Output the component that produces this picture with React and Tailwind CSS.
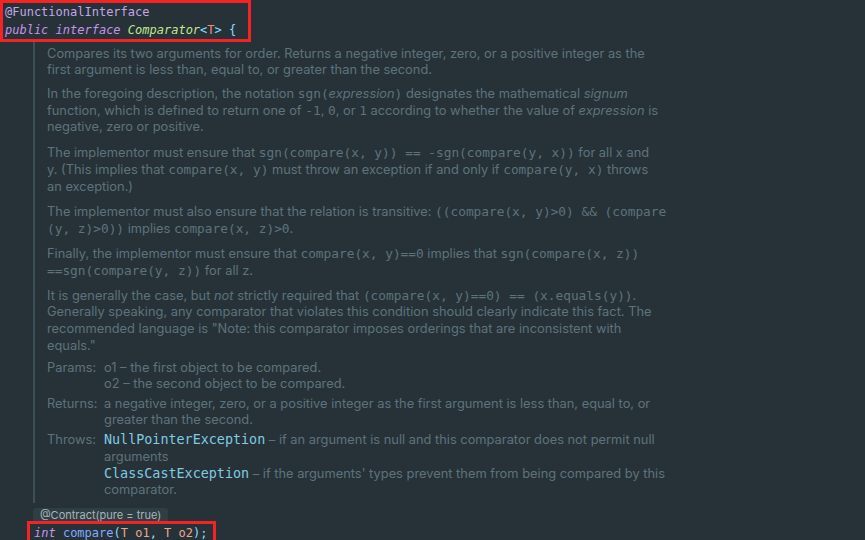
import React from 'react'

const mono = "font-['DejaVu_Sans_Mono','Liberation_Mono',monospace]"

// inline code inside the doc text
const C = ({ children }) => (
  <span className={`${mono} text-[12.8px] leading-none`}>{children}</span>
)

const Link = ({ children }) => (
  <span className={`${mono} text-[13.4px] leading-none text-[#80cbe4]`}>{children}</span>
)

const Row = ({ label, children }) => (
  <div className="flex">
    <div className="w-[57px] shrink-0">{label}</div>
    <div>{children}</div>
  </div>
)

const App = () => {
  return (
    <div className="w-[865px] h-[540px] overflow-hidden bg-[#263238] font-['Inter','Liberation_Sans',Arial,sans-serif]">
      {/* declaration */}
      <div className={`w-[251px] h-[42px] border-[3px] border-[#f52424] pl-[2px] ${mono} text-[12px] leading-[18px] whitespace-nowrap`}>
        <div className="text-[#c3a6e6]">@FunctionalInterface</div>
        <div className="italic">
          <span className="text-[#c792ea]">public interface </span>
          <span className="text-[#c3e88d]">Comparator</span>
          <span className="not-italic text-[#89ddff]">&lt;</span>
          <span className="not-italic text-[#f78c6c]">T</span>
          <span className="not-italic text-[#89ddff]">&gt; {'{'}</span>
        </div>
      </div>

      {/* javadoc */}
      <div className="ml-[33px] border-l-2 border-[#3c4e56] pl-[12px] pt-[4px] pb-[4px] text-[12.85px] text-[#5f727c] whitespace-nowrap">
        <p className="leading-[16px] mb-[8px]">
          Compares its two arguments for order. Returns a negative integer, zero, or a positive integer as the<br />
          first argument is less than, equal to, or greater than the second.
        </p>
        <p className="leading-[16.5px] mb-[8px]">
          In the foregoing description, the notation <C>sgn(</C><i>expression</i><C>)</C> designates the mathematical <i>signum</i><br />
          function, which is defined to return one of <C>-1</C>, <C>0</C>, or <C>1</C> according to whether the value of <i>expression</i> is<br />
          negative, zero or positive.
        </p>
        <p className="leading-[17px] mb-[8px]">
          The implementor must ensure that <C>sgn(compare(x, y)) == -sgn(compare(y, x))</C> for all x and<br />
          y. (This implies that <C>compare(x, y)</C> must throw an exception if and only if <C>compare(y, x)</C> throws<br />
          an exception.)
        </p>
        <p className="leading-[17px] mb-[8px]">
          The implementor must also ensure that the relation is transitive: <C>((compare(x, y)&gt;0) &amp;&amp; (compare</C><br />
          <C>(y, z)&gt;0))</C> implies <C>compare(x, z)&gt;0</C>.
        </p>
        <p className="leading-[17px] mb-[9px]">
          Finally, the implementor must ensure that <C>compare(x, y)==0</C> implies that <C>sgn(compare(x, z))</C><br />
          <C>==sgn(compare(y, z))</C> for all z.
        </p>
        <p className="leading-[16.7px] mb-[6px]">
          It is generally the case, but <i>not</i> strictly required that <C>(compare(x, y)==0) == (x.equals(y))</C>.<br />
          Generally speaking, any comparator that violates this condition should clearly indicate this fact. The<br />
          recommended language is "Note: this comparator imposes orderings that are inconsistent with<br />
          equals."
        </p>

        <div className="leading-[16px] flex flex-col gap-[4px]">
          <Row label="Params:">
            o1 – the first object to be compared.<br />
            o2 – the second object to be compared.
          </Row>
          <Row label="Returns:">
            a negative integer, zero, or a positive integer as the first argument is less than, equal to, or<br />
            greater than the second.
          </Row>
          <div className="leading-[16.7px]">
            <Row label="Throws:">
              <Link>NullPointerException</Link> – if an argument is null and this comparator does not permit null<br />
              arguments<br />
              <Link>ClassCastException</Link> – if the arguments' types prevent them from being compared by this<br />
              comparator.
            </Row>
          </div>
        </div>
      </div>

      {/* annotation hint */}
      <div className="mt-[5px] ml-[33px] w-fit h-[13px] rounded-t-[3px] bg-[#2f3e45] px-[7px] text-[11px] leading-[14px] text-[#a7b4ba]">
        @Contract(pure = true)
      </div>

      {/* method */}
      <div className={`ml-[27px] w-[189px] h-[24px] border-[3px] border-[#f52424] pl-[4px] ${mono} text-[12px] leading-[18px] whitespace-nowrap`}>
        <span className="italic text-[#c792ea]">int</span>
        <span className="text-[#82aaff]"> compare</span>
        <span className="text-[#89ddff]">(</span>
        <span className="text-[#e9a989]">T o1</span>
        <span className="text-[#89ddff]">, </span>
        <span className="text-[#e9a989]">T o2</span>
        <span className="text-[#89ddff]">);</span>
      </div>
    </div>
  )
}

export default App
